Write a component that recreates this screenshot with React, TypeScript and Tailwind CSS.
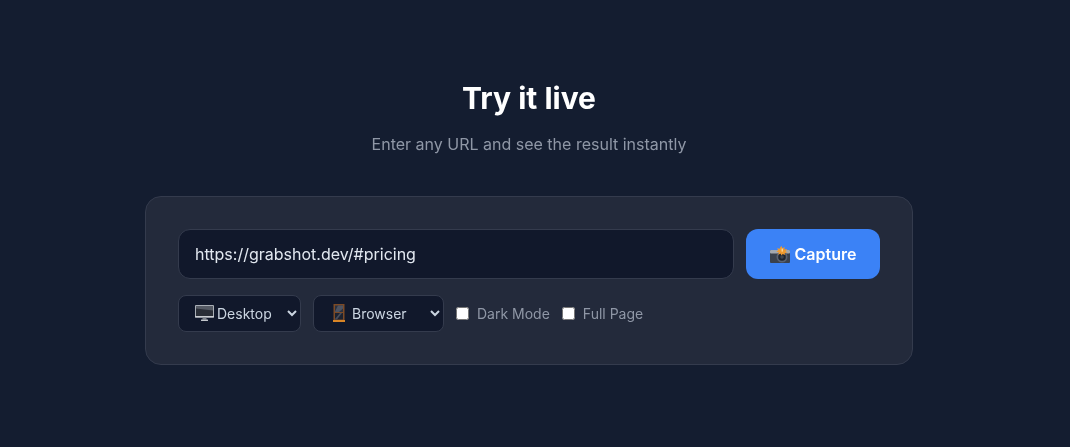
import { useState } from 'react';

function DesktopIcon() {
  return (
    <svg viewBox="0 0 19 16" className="h-4 w-[19px]">
      <rect x="0" y="0" width="19" height="12.5" rx="1" fill="#a9aeb5" />
      <rect x="1" y="1" width="17" height="10" fill="#2a2e37" />
      <path d="M1 1h17v4.5L1 3.5z" fill="#555a64" />
      <rect x="0" y="11" width="19" height="1.5" fill="#c9ccd1" />
      <rect x="7.5" y="12.5" width="4" height="2" fill="#7d828a" />
      <rect x="6" y="14.5" width="7" height="1.5" rx="0.5" fill="#c4c7cc" />
    </svg>
  );
}

function WindowIcon() {
  return (
    <svg viewBox="0 0 12 18" className="h-[18px] w-3">
      <rect x="0.5" y="0" width="11" height="17" fill="#7c4a26" />
      <rect x="2" y="1.5" width="8" height="6.5" fill="#2b3140" />
      <rect x="2" y="9" width="8" height="6.5" fill="#1c2230" />
      <path d="M5 1.5h5v3L6 8H2v-.5z" fill="#4d5361" />
      <path d="M2 15l5-6h2l-5 6.5H2z" fill="#474d5b" />
      <rect x="0" y="16" width="12" height="2" fill="#d98526" />
    </svg>
  );
}

function CameraIcon() {
  return (
    <svg viewBox="0 0 20 17" className="h-[17px] w-5 shrink-0">
      <rect x="0" y="4" width="20" height="13" rx="1" fill="#3a414d" />
      <rect x="0" y="4" width="20" height="3.5" rx="1" fill="#a3a8af" />
      <circle cx="12" cy="11" r="5.5" fill="#596170" />
      <circle cx="12" cy="11" r="3.8" fill="#20252e" />
      <circle cx="12" cy="11" r="1.8" fill="#3f4651" />
      <path d="M11.5 0l1 2.4 2-1.6-.1 2.6 2.8-.3-1.7 2.2 1.8 1.2-2.6.6.2 2-2.2-1.2-1.2 1.7-1-2-2.2 1.1.4-2.4-2.4-.6 2-1.3-1.3-2.1 2.6.4L10.6.7z" fill="#f09a2e" />
      <rect x="11.6" y="2.6" width="1.2" height="3" fill="#ffe2a6" />
    </svg>
  );
}

export default function App() {
  const [url, setUrl] = useState('https://grabshot.dev/#pricing');

  return (
    <section className="min-h-[447px] bg-[#141d30] font-['Inter',sans-serif] text-white antialiased">
      <div className="pt-[78px] pr-3 [will-change:transform]">
        <div className="text-center">
          <h2 className="text-[30px] leading-[40px] font-bold">Try it live</h2>
          <p className="mt-[16px] text-[16px] leading-[20px] text-[#8f97a6]">Enter any URL and see the result instantly</p>
        </div>
        <div className="mx-auto mt-[42px] w-[768px] rounded-2xl border border-[#343b4d] bg-[#232a3b] p-8">
          <div className="flex gap-3">
            <input
              type="text"
              value={url}
              onChange={(e) => setUrl(e.target.value)}
              className="h-[50px] flex-1 rounded-xl border border-[#343b4d] bg-[#11182b] px-4 text-[16px] text-[#e2e8f0] outline-none"
            />
            <button className="flex h-[50px] w-[134px] items-center justify-center gap-[5px] rounded-xl bg-[#3b82f6] text-[16px] font-semibold text-white">
              <CameraIcon />
              Capture
            </button>
          </div>
          <div className="mt-4 flex items-center gap-3">
            <div className="relative">
              <select className="h-[37px] w-[123px] rounded-lg border border-[#343b4d] bg-[#11182b] pr-3 pl-[34px] text-[14px] text-[#cbd5e1] outline-none">
                <option>Desktop</option>
                <option>Mobile</option>
              </select>
              <span className="pointer-events-none absolute top-[10px] left-[17px]">
                <DesktopIcon />
              </span>
            </div>
            <div className="relative">
              <select className="h-[37px] w-[131px] rounded-lg border border-[#343b4d] bg-[#11182b] pr-3 pl-[34px] text-[14px] text-[#cbd5e1] outline-none">
                <option>Browser</option>
                <option>None</option>
              </select>
              <span className="pointer-events-none absolute top-[9px] left-[20px]">
                <WindowIcon />
              </span>
            </div>
            <label className="flex items-center gap-2 text-[14px] text-[#8f97a6]">
              <input type="checkbox" className="h-[13px] w-[13px]" />
              Dark Mode
            </label>
            <label className="flex items-center gap-2 text-[14px] text-[#8f97a6]">
              <input type="checkbox" className="h-[13px] w-[13px]" />
              Full Page
            </label>
          </div>
        </div>
      </div>
    </section>
  );
}
